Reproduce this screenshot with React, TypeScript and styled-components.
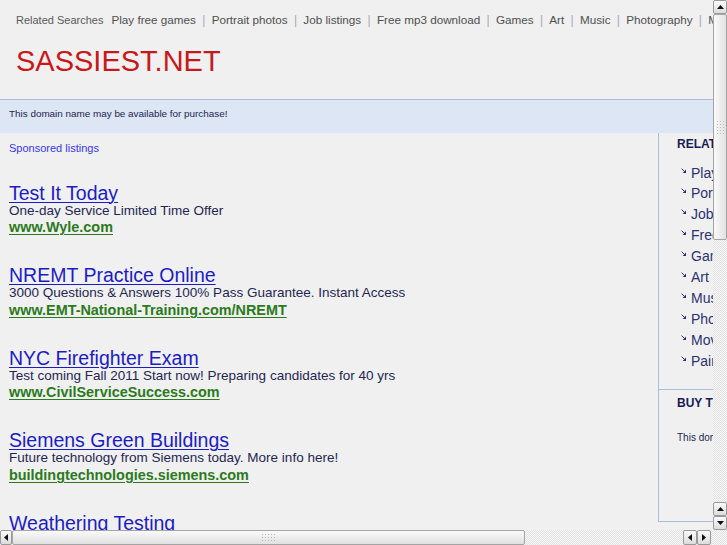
import React from 'react';
import styled, { createGlobalStyle } from 'styled-components';

const GlobalStyle = createGlobalStyle`
  html, body { margin: 0; padding: 0; overflow: hidden; background: #f0f0f0; }
  body { font-family: "Liberation Sans", Arial, Helvetica, sans-serif; }
`;

const Frame = styled.div`
  width: 727px;
  height: 545px;
  display: grid;
  grid-template-columns: 713px 14px;
  grid-template-rows: 530px 15px;
  background: #f0f0f0;
  overflow: hidden;
`;

const Viewport = styled.div`
  overflow: hidden;
  position: relative;
`;

const Page = styled.div`
  width: 908px;
`;

const Header = styled.header`
  padding: 13px 16px 21px;
  border-bottom: 1px solid #a9bde0;
`;

const TopBar = styled.div`
  display: flex;
  align-items: baseline;
  white-space: nowrap;
  line-height: 14px;
  color: #555;
`;

const TopLabel = styled.span`
  font-size: 11px;
  color: #5a5a5a;
  margin-right: 8px;
`;

const TopLink = styled.span`
  font-size: 11.7px;
  color: #4f4f4f;
`;

const Pipe = styled.span`
  font-size: 12px;
  color: #a8a8b8;
  margin: 0 6.3px;
`;

const SiteTitle = styled.h1`
  margin: 17px 0 0;
  font-size: 29px;
  line-height: 34px;
  font-weight: normal;
  color: #c8181a;
`;

const Band = styled.div`
  background: #dde6f5;
  padding: 4px 9px 9px;
  font-size: 9.9px;
  line-height: 20px;
  color: #1c2450;
`;

const Main = styled.div`
  display: flex;
  align-items: flex-start;
`;

const LeftCol = styled.div`
  width: 649px;
  flex: none;
  padding: 8px 0 0 9px;
`;

const Sponsored = styled.div`
  font-size: 11px;
  line-height: 14px;
  color: #3636e8;
  margin-bottom: 27.5px;
`;

const AdList = styled.div`
  display: flex;
  flex-direction: column;
  gap: 30px;
`;

const Ad = styled.div`
  display: flex;
  flex-direction: column;
  align-items: flex-start;
`;

const AdTitle = styled.a`
  font-size: 19.5px;
  line-height: 20px;
  color: #1c1cc4;
  text-decoration: underline;
  text-decoration-thickness: 1px;
  text-underline-offset: 2px;
`;

const AdDesc = styled.div`
  font-size: 13.5px;
  line-height: 16.5px;
  color: #1f2652;
`;

const AdUrl = styled.a`
  font-size: 14.4px;
  line-height: 16px;
  font-weight: bold;
  color: #2b7a1c;
  text-decoration: underline;
  text-decoration-thickness: 1px;
  text-underline-offset: 2px;
`;

const RightCol = styled.aside`
  width: 249px;
  flex: none;
  border-left: 1px solid #a9bde0;
  border-bottom: 1px solid #a9bde0;
`;

const Section = styled.section<{ $top: number; $bottom: number; $divider?: boolean }>`
  padding: ${(p) => p.$top}px 0 ${(p) => p.$bottom}px 18px;
  border-bottom: ${(p) => (p.$divider ? '1px solid #a9bde0' : 'none')};
`;

const SideHead = styled.h3`
  margin: 0;
  font-size: 12px;
  line-height: 14px;
  font-weight: bold;
  color: #161c56;
  white-space: nowrap;
`;

const SideList = styled.ul`
  list-style: none;
  margin: 11.5px 0 0;
  padding: 0 0 0 4px;
`;

const SideItem = styled.li`
  display: flex;
  align-items: flex-start;
  gap: 5px;
  font-size: 14px;
  line-height: 20.9px;
  color: #2a3272;
  white-space: nowrap;
`;

const Bullet = styled.svg`
  flex: none;
  margin-top: 5px;
`;

const SideText = styled.p`
  margin: 21px 0 0;
  font-size: 10px;
  line-height: 13px;
  color: #1f2652;
  white-space: nowrap;
`;

/* Scrollbars */
const trackBg = `repeating-conic-gradient(#e2e2e2 0 25%, #f7f7f7 0 50%) 0 0 / 2px 2px`;

const VBar = styled.div`
  display: flex;
  flex-direction: column;
  background: ${trackBg};
`;

const HBar = styled.div`
  display: flex;
  background: ${trackBg};
`;

const Corner = styled.div`
  background: ${trackBg};
`;

const ScrollBtn = styled.div<{ $w: number; $h: number }>`
  flex: none;
  width: ${(p) => p.$w}px;
  height: ${(p) => p.$h}px;
  box-sizing: border-box;
  border: 1px solid #9a9a9a;
  border-radius: 2px;
  background: linear-gradient(#fbfbfb, #dcdcdc);
  display: flex;
  align-items: center;
  justify-content: center;
`;

const Thumb = styled.div<{ $vertical?: boolean; $size: number }>`
  flex: none;
  box-sizing: border-box;
  ${(p) => (p.$vertical ? `height: ${p.$size}px; width: 14px;` : `width: ${p.$size}px; height: 15px;`)}
  border: 1px solid #a4a4a4;
  border-radius: 2px;
  background: ${(p) =>
    p.$vertical ? 'linear-gradient(90deg, #fafafa, #e2e2e2)' : 'linear-gradient(#fafafa, #e0e0e0)'};
  display: flex;
  align-items: center;
  justify-content: center;
`;

const Grip = styled.div<{ $w: number; $h: number }>`
  width: ${(p) => p.$w}px;
  height: ${(p) => p.$h}px;
  background: radial-gradient(circle, #b8b8b8 0.7px, transparent 0.9px) 0 0 / 3px 3px;
`;

const Spacer = styled.div<{ $fixed?: number }>`
  flex: ${(p) => (p.$fixed ? `none` : '1')};
  width: ${(p) => (p.$fixed ? `${p.$fixed}px` : 'auto')};
`;

const Arrow = ({ dir }: { dir: 'up' | 'down' | 'left' | 'right' }) => {
  const pts = {
    up: '0,4 3.5,0 7,4',
    down: '0,0 3.5,4 7,0',
    left: '4,0 0,3.5 4,7',
    right: '0,0 4,3.5 0,7',
  }[dir];
  const vertical = dir === 'up' || dir === 'down';
  return (
    <svg width={vertical ? 7 : 4} height={vertical ? 4 : 7} viewBox={vertical ? '0 0 7 4' : '0 0 4 7'}>
      <polygon points={pts} fill="#111" />
    </svg>
  );
};

const topLinks = [
  'Play free games',
  'Portrait photos',
  'Job listings',
  'Free mp3 download',
  'Games',
  'Art',
  'Music',
  'Photography',
  'Movies',
  'Painting',
];

const ads = [
  {
    title: 'Test It Today',
    desc: 'One-day Service Limited Time Offer',
    url: 'www.Wyle.com',
  },
  {
    title: 'NREMT Practice Online',
    desc: '3000 Questions & Answers 100% Pass Guarantee. Instant Access',
    url: 'www.EMT-National-Training.com/NREMT',
  },
  {
    title: 'NYC Firefighter Exam',
    desc: 'Test coming Fall 2011 Start now! Preparing candidates for 40 yrs',
    url: 'www.CivilServiceSuccess.com',
  },
  {
    title: 'Siemens Green Buildings',
    desc: 'Future technology from Siemens today. More info here!',
    url: 'buildingtechnologies.siemens.com',
  },
  {
    title: 'Weathering Testing',
    desc: 'Accelerated weathering test equipment and services',
    url: 'www.q-lab.com',
  },
];

export default function App() {
  return (
    <>
      <GlobalStyle />
      <Frame>
        <Viewport>
          <Page>
            <Header>
              <TopBar>
                <TopLabel>Related Searches</TopLabel>
                {topLinks.map((l, i) => (
                  <React.Fragment key={l}>
                    {i > 0 && <Pipe>|</Pipe>}
                    <TopLink>{l}</TopLink>
                  </React.Fragment>
                ))}
              </TopBar>
              <SiteTitle>SASSIEST.NET</SiteTitle>
            </Header>
            <Band>This domain name may be available for purchase!</Band>
            <Main>
              <LeftCol>
                <Sponsored>Sponsored listings</Sponsored>
                <AdList>
                  {ads.map((ad) => (
                    <Ad key={ad.title}>
                      <AdTitle>{ad.title}</AdTitle>
                      <AdDesc>{ad.desc}</AdDesc>
                      <AdUrl>{ad.url}</AdUrl>
                    </Ad>
                  ))}
                </AdList>
              </LeftCol>
              <RightCol>
                <Section $top={4} $bottom={17} $divider>
                  <SideHead>RELATED SEARCHES</SideHead>
                  <SideList>
                    {topLinks.map((l) => (
                      <SideItem key={l}>
                        <Bullet width="5" height="5" viewBox="0 0 5 5">
                          <path d="M0.6 0.6 L3.6 3.6" stroke="#2a3272" strokeWidth="1" />
                          <polygon points="5,1.6 5,5 1.6,5" fill="#2a3272" />
                        </Bullet>
                        {l}
                      </SideItem>
                    ))}
                  </SideList>
                </Section>
                <Section $top={6.5} $bottom={77}>
                  <SideHead>BUY THIS DOMAIN</SideHead>
                  <SideText>This domain may be for sale. Buy it now!</SideText>
                </Section>
              </RightCol>
            </Main>
          </Page>
        </Viewport>
        <VBar>
          <ScrollBtn $w={14} $h={14}>
            <Arrow dir="up" />
          </ScrollBtn>
          <Thumb $vertical $size={226}>
            <Grip $w={9} $h={15} />
          </Thumb>
          <Spacer />
          <ScrollBtn $w={14} $h={14}>
            <Arrow dir="up" />
          </ScrollBtn>
          <ScrollBtn $w={14} $h={14}>
            <Arrow dir="down" />
          </ScrollBtn>
        </VBar>
        <HBar>
          <ScrollBtn $w={12} $h={15}>
            <Arrow dir="left" />
          </ScrollBtn>
          <Thumb $size={513}>
            <Grip $w={15} $h={9} />
          </Thumb>
          <Spacer />
          <ScrollBtn $w={14} $h={15}>
            <Arrow dir="left" />
          </ScrollBtn>
          <ScrollBtn $w={14} $h={15}>
            <Arrow dir="right" />
          </ScrollBtn>
          <Spacer $fixed={2} />
        </HBar>
        <Corner />
      </Frame>
    </>
  );
}
